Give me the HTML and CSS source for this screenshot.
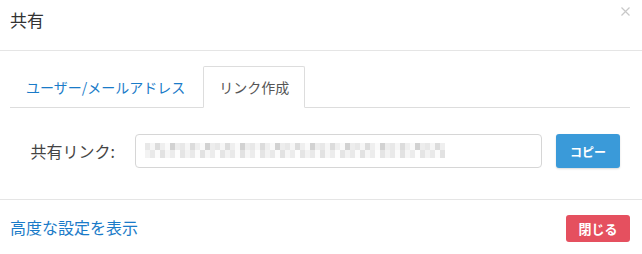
FILE: index.html
```html
<!DOCTYPE html>
<html lang="ja">
<head>
<meta charset="utf-8">
<title>共有</title>
<link rel="stylesheet" href="styles.css">
</head>
<body>
<div class="modal">
  <div class="modal-header">
    <h4 class="modal-title">共有</h4>
    <button class="close" type="button" aria-label="閉じる">
      <svg width="9" height="9" viewBox="0 0 9 9"><path d="M0.5 0.5 L8.5 8.5 M8.5 0.5 L0.5 8.5" stroke="#c8c8c8" stroke-width="1.2" fill="none"/></svg>
    </button>
  </div>
  <div class="modal-body">
    <ul class="tabs">
      <li class="tab"><a>ユーザー/メールアドレス</a></li>
      <li class="tab active"><a>リンク作成</a></li>
    </ul>
    <div class="form-row">
      <label class="form-label">共有リンク:</label>
      <div class="input">
        <div class="blur"></div>
      </div>
      <button class="btn btn-copy" type="button">コピー</button>
    </div>
  </div>
  <div class="modal-footer">
    <a class="adv-link">高度な設定を表示</a>
    <button class="btn btn-close" type="button">閉じる</button>
  </div>
</div>
</body>
</html>
```
FILE: styles.css
```css
* { box-sizing: border-box; }
html, body { margin: 0; padding: 0; background: #fff; }
body {
  font-family: "Noto Sans CJK JP", "Noto Sans", "Liberation Sans", sans-serif;
  color: #333;
  width: 642px;
  height: 254px;
  overflow: hidden;
}
.modal { width: 642px; }
.modal-header {
  height: 51px;
  padding: 0 12px 0 10px;
  display: flex;
  justify-content: space-between;
  align-items: flex-start;
  border-bottom: 1px solid #e5e5e5;
}
.modal-title {
  margin: 0;
  padding-top: 8px;
  font-size: 17px;
  font-weight: normal;
  line-height: 24px;
  color: #333;
}
.close {
  margin-top: 7px;
  padding: 0;
  border: 0;
  background: none;
  width: 9px;
  height: 9px;
  display: flex;
}
.modal-body { padding: 15px 12px 0 10px; }
.tabs {
  list-style: none;
  margin: 0;
  padding: 0;
  display: flex;
  border-bottom: 1px solid #ddd;
  height: 42px;
}
.tab {
  margin-right: 2px;
  margin-bottom: -1px;
  border: 1px solid transparent;
  border-radius: 2px 2px 0 0;
  padding: 0 15px;
  display: flex;
  align-items: center;
  font-size: 14px;
  color: #1a7bc8;
}
.tab.active {
  border-color: #ddd;
  border-bottom-color: #fff;
  background: #fff;
  color: #555;
}
.form-row {
  display: flex;
  align-items: center;
  margin-top: 26px;
  height: 34px;
}
.form-label {
  width: 105px;
  text-align: right;
  font-size: 16px;
  color: #444;
  margin-right: 20px;
}
.input {
  width: 407px;
  height: 34px;
  border: 1px solid #d6d6d6;
  border-radius: 4px;
  padding: 8px 9px;
}
.blur {
  width: 300px;
  height: 15px;
  background:
    repeating-linear-gradient(90deg, #e8e8e8 0 5px, #f6f6f6 5px 10px, #dcdcdc 10px 15px, #efefef 15px 20px, #fafafa 20px 25px, #d2d2d2 25px 30px, #ededed 30px 35px) top/100% 7px no-repeat,
    repeating-linear-gradient(90deg, #f3f3f3 0 5px, #e9e9e9 5px 10px, #fbfbfb 10px 15px, #e2e2e2 15px 20px, #f6f6f6 20px 25px, #ececec 25px 30px, #fdfdfd 30px 35px, #e5e5e5 35px 40px) bottom/100% 8px no-repeat;
}
.btn {
  border: 0;
  font-family: inherit;
  font-weight: bold;
  color: #fff;
  cursor: pointer;
}
.btn-copy {
  margin-left: 14px;
  width: 64px;
  height: 34px;
  border-radius: 3px;
  background: #3a9ad9;
  font-size: 12px;
  box-shadow: 0 1px 2px rgba(0,0,0,0.15);
}
.modal-footer {
  margin-top: 31px;
  border-top: 1px solid #e5e5e5;
  padding: 15px 12px 0 10px;
  display: flex;
  justify-content: space-between;
  align-items: center;
}
.adv-link {
  font-size: 16px;
  color: #1a7bc8;
  text-decoration: none;
  margin-top: -4px;
}
.btn-close {
  width: 64px;
  height: 27px;
  border-radius: 3px;
  background: #e5505f;
  font-size: 13px;
  padding: 0;
}
```
